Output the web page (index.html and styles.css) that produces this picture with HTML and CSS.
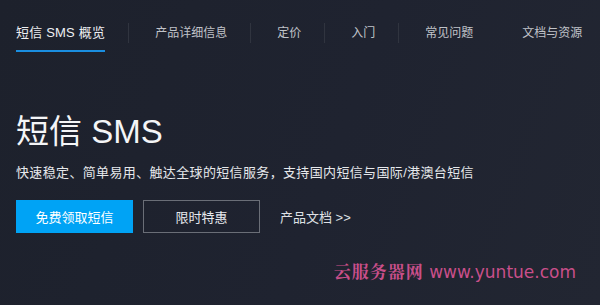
FILE: index.html
```html
<!DOCTYPE html>
<html lang="zh-CN">
<head>
    <meta charset="UTF-8">
    <meta name="viewport" content="width=device-width, initial-scale=1.0">
    <title>短信 SMS</title>
    <link rel="stylesheet" href="styles.css">
</head>
<body>

    <!-- Navegación de la página de producto -->
    <nav class="nav">
        <a class="nav-item active" href="#">短信 SMS 概览</a>
        <span class="sep"></span>
        <a class="nav-item" href="#">产品详细信息</a>
        <span class="sep"></span>
        <a class="nav-item" href="#">定价</a>
        <span class="sep"></span>
        <a class="nav-item" href="#">入门</a>
        <span class="sep"></span>
        <a class="nav-item" href="#">常见问题</a>
        <a class="nav-item last" href="#">文档与资源</a>
    </nav>

    <main class="hero">
        <h1>短信 SMS</h1>
        <p class="desc">快速稳定、简单易用、触达全球的短信服务，支持国内短信与国际/港澳台短信</p>

        <div class="actions">
            <button class="btn btn-primary">免费领取短信</button>
            <button class="btn btn-outline">限时特惠</button>
            <a class="doc-link" href="#">产品文档 &gt;&gt;</a>
        </div>
    </main>

    <footer class="mark">
        <span class="mark-cn">云服务器网</span> www.yuntue.com
    </footer>

</body>
</html>
```

FILE: styles.css
```css
body {
    margin: 0;
    padding: 0;
    height: 305px;
    overflow: hidden;
    font-family: "Liberation Sans", "Noto Sans CJK SC", sans-serif;
    background: linear-gradient(110deg, #1d212c 0%, #1f2330 55%, #222632 100%);
    color: #fff;
}

.nav {
    display: flex;
    align-items: flex-start;
    padding: 24px 0 0 16px;
}

.nav-item {
    color: #c0c3c9;
    font-size: 12px;
    line-height: 18px;
    text-decoration: none;
    padding-bottom: 8px;
    border-bottom: 2px solid transparent;
}

.nav-item.active {
    color: #eef0f3;
    font-size: 13px;
    letter-spacing: 0.2px;
    border-bottom-color: #1a8ee0;
}

.nav-item.last {
    margin-left: 49px;
}

.sep {
    width: 1px;
    height: 20px;
    margin: -1px 26px 0 23px;
    background-color: #30343f;
}

.hero {
    padding: 63px 16px 0;
}

.hero h1 {
    margin: 0;
    font-size: 33px;
    line-height: 33px;
    font-weight: normal;
    color: #f4f5f7;
}

.desc {
    margin: 15px 0 0;
    font-size: 13px;
    line-height: 20px;
    letter-spacing: 0.35px;
    color: #e6e8eb;
}

.actions {
    display: flex;
    align-items: center;
    margin-top: 17px;
}

.btn {
    width: 117px;
    height: 33px;
    font-family: inherit;
    font-size: 13px;
    color: #fff;
    border: 1px solid transparent;
    cursor: pointer;
    padding: 0;
}

.btn-primary {
    background-color: #00a3f5;
    border-color: #00a3f5;
}

.btn-outline {
    background-color: transparent;
    border-color: #6a6e77;
    color: #e8eaee;
    margin-left: 10px;
}

.doc-link {
    margin-left: 20px;
    font-size: 13px;
    color: #dfe1e5;
    text-decoration: none;
}

.mark {
    text-align: right;
    padding: 29px 24px 0 0;
    font-size: 17px;
    line-height: 18px;
    color: #c94f8a;
    font-family: "DejaVu Sans", "Noto Sans CJK SC", sans-serif;
}

.mark-cn {
    font-family: "Noto Serif CJK SC", "Noto Sans CJK SC", serif;
    font-weight: bold;
    letter-spacing: 1px;
}
```
